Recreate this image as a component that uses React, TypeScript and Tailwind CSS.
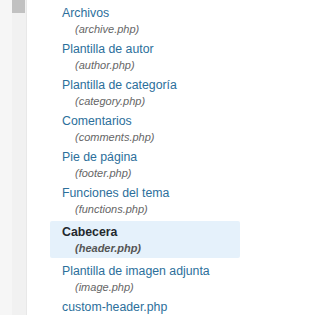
const items = [
  { name: "Archivos", file: "archive.php" },
  { name: "Plantilla de autor", file: "author.php" },
  { name: "Plantilla de categoría", file: "category.php" },
  { name: "Comentarios", file: "comments.php" },
  { name: "Pie de página", file: "footer.php" },
  { name: "Funciones del tema", file: "functions.php" },
  { name: "Cabecera", file: "header.php", active: true },
  { name: "Plantilla de imagen adjunta", file: "image.php" },
  { name: "custom-header.php" },
];

export default function App() {
  return (
    <div className="flex h-[315px] w-[246px] overflow-hidden bg-white font-['Liberation_Sans',Arial,sans-serif]">
      <div className="w-[12px] shrink-0 bg-[#f6f6f6]" />
      <div className="flex w-[14px] shrink-0 flex-col bg-[#f1f1f1]">
        <div className="h-[13px] w-[13px] bg-[#c1c1c1]" />
      </div>
      <div className="w-px shrink-0 bg-[#e8e8e8]" />
      <ul className="flex-1 pl-[23px] pr-[6px] pt-[3px]">
        {items.map((it) =>
          it.active ? (
            <li key={it.name} className="mb-[3px] mt-[2px] rounded-[2px] bg-[#e5f1fb] pb-[2px] pl-[12px] pt-[3px]">
              <div className="h-[16px] text-[12.3px] font-bold leading-[16px] text-[#23282d]">{it.name}</div>
              <div className="h-[16px] pl-[13px] text-[11px] font-bold italic leading-[16px] text-[#555]">({it.file})</div>
            </li>
          ) : (
            <li key={it.name} className="py-[2px] pl-[12px]">
              <div className="h-[16px] text-[12.3px] leading-[16px] text-[#2c6f9b]">{it.name}</div>
              {it.file && (
                <div className="h-[16px] pl-[13px] text-[11px] italic leading-[16px] text-[#666]">({it.file})</div>
              )}
            </li>
          )
        )}
      </ul>
    </div>
  );
}
